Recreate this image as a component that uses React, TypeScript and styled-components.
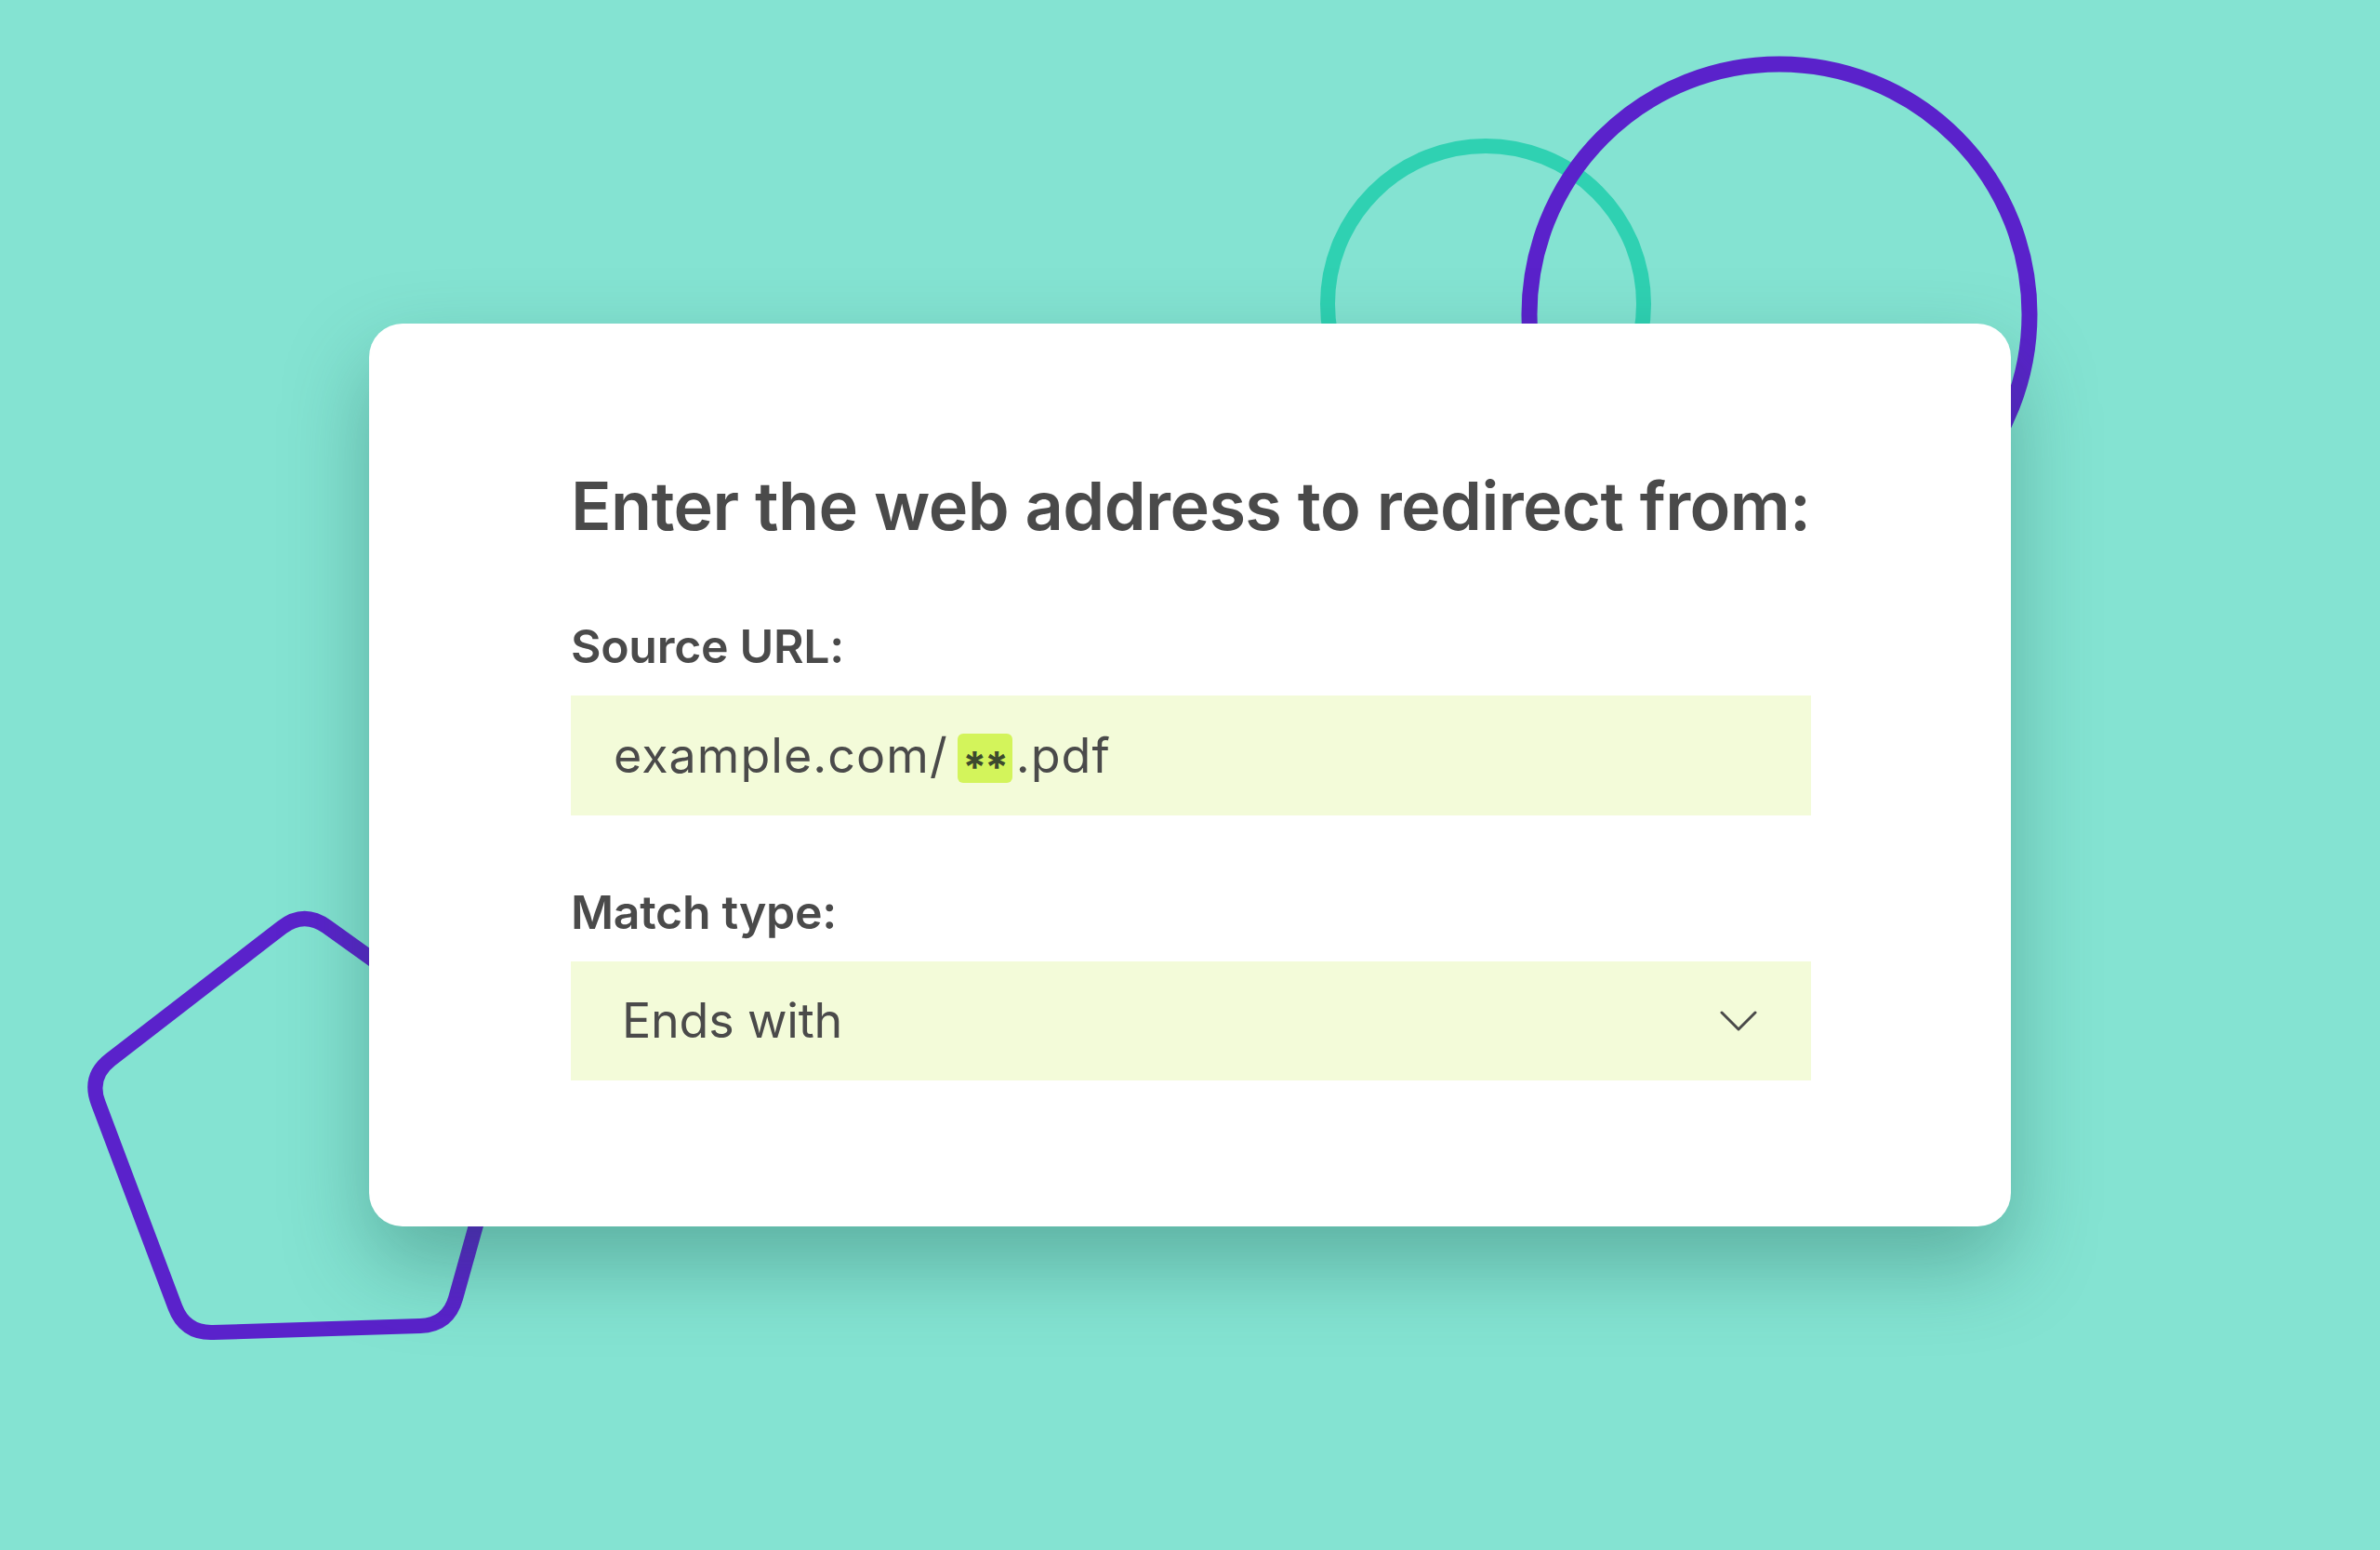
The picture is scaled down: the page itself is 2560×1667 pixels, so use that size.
import React from 'react'
import styled, { createGlobalStyle } from 'styled-components'

const BG = '#84e3d2'
const INK = '#4a4a4a'
const FIELD_BG = '#f3fbd9'

const GlobalStyle = createGlobalStyle`
  html, body {
    margin: 0;
    padding: 0;
  }
  body {
    background: ${BG};
    font-family: Inter, 'Noto Sans', sans-serif;
    overflow: hidden;
  }
`

const Page = styled.main`
  position: relative;
  width: 100vw;
  height: 100vh;
  display: flex;
  align-items: center;
  justify-content: center;
  background: ${BG};
  overflow: hidden;
`

const Decor = styled.svg`
  position: absolute;
  inset: 0;
  width: 100%;
  height: 100%;
`

const Card = styled.section`
  position: relative;
  width: 1766px;
  box-sizing: border-box;
  padding: 160px 215px 157px 217px;
  background: #ffffff;
  border-radius: 36px;
  box-shadow: 0 40px 90px rgba(16, 80, 70, 0.35);
`

const Title = styled.h1`
  margin: 0 0 90px;
  font-size: 72px;
  line-height: 1;
  font-weight: 600;
  letter-spacing: -0.6px;
  white-space: nowrap;
  color: ${INK};
`

const Field = styled.div`
  display: flex;
  flex-direction: column;
  gap: 28px;

  & + & {
    margin-top: 79px;
  }
`

const Label = styled.label`
  font-size: 50px;
  line-height: 1;
  font-weight: 600;
  letter-spacing: -0.3px;
  color: ${INK};
`

const Box = styled.div<{ $height: number; $pad: string }>`
  display: flex;
  align-items: center;
  justify-content: space-between;
  height: ${({ $height }) => $height}px;
  padding: ${({ $pad }) => $pad};
  background: ${FIELD_BG};
  color: ${INK};
`

const Value = styled.span<{ $size: number; $spacing: string }>`
  display: inline-flex;
  align-items: center;
  font-size: ${({ $size }) => $size}px;
  line-height: 1;
  font-weight: 400;
  letter-spacing: ${({ $spacing }) => $spacing};
  white-space: nowrap;
`

const Wildcard = styled.span`
  display: inline-flex;
  align-items: center;
  justify-content: center;
  box-sizing: border-box;
  width: 59px;
  height: 53px;
  margin: 6px 4px 0 10px;
  padding-top: 18px;
  border-radius: 6px;
  background: #d3f45b;
  color: #3d4a2e;
  font-size: 46px;
  font-weight: 700;
  letter-spacing: -2px;
`

const Chevron = () => (
  <svg width="40" height="22" viewBox="0 0 40 22" fill="none">
    <path d="M2 2 L20 20 L38 2" stroke={INK} strokeWidth="3" strokeLinecap="round" strokeLinejoin="round" />
  </svg>
)

function roundedPath(pts: [number, number][], r: number) {
  const n = pts.length
  let d = ''
  for (let i = 0; i < n; i++) {
    const [x, y] = pts[i]
    const [px, py] = pts[(i - 1 + n) % n]
    const [nx, ny] = pts[(i + 1) % n]
    const l1 = Math.hypot(px - x, py - y)
    const l2 = Math.hypot(nx - x, ny - y)
    const ax = x + ((px - x) * r) / l1
    const ay = y + ((py - y) * r) / l1
    const bx = x + ((nx - x) * r) / l2
    const by = y + ((ny - y) * r) / l2
    d += `${i === 0 ? 'M' : 'L'}${ax.toFixed(1)} ${ay.toFixed(1)} Q${x} ${y} ${bx.toFixed(1)} ${by.toFixed(1)} `
  }
  return d + 'Z'
}

const pentagon = roundedPath(
  [
    [327, 979],
    [95, 1158],
    [199, 1434],
    [482, 1425],
    [560, 1146],
  ],
  30
)

export default function App() {
  return (
    <>
      <GlobalStyle />
      <Page>
        <Decor viewBox="0 0 2560 1667" preserveAspectRatio="xMidYMid slice">
          <circle cx="1598" cy="327" r="170" fill="none" stroke="#2fd1b2" strokeWidth="16" />
          <circle cx="1914" cy="338" r="269" fill="none" stroke="#5a22cb" strokeWidth="17" />
          <path d={pentagon} fill="none" stroke="#5a22cb" strokeWidth="16" />
        </Decor>
        <Card>
          <Title>Enter the web address to redirect from:</Title>
          <Field>
            <Label>Source URL:</Label>
            <Box $height={129} $pad="0 46px">
              <Value $size={52} $spacing="0.02em">
                example.com/<Wildcard>**</Wildcard>.pdf
              </Value>
            </Box>
          </Field>
          <Field>
            <Label>Match type:</Label>
            <Box $height={128} $pad="0 58px 0 55px">
              <Value $size={52} $spacing="-0.2px">Ends with</Value>
              <Chevron />
            </Box>
          </Field>
        </Card>
      </Page>
    </>
  )
}
